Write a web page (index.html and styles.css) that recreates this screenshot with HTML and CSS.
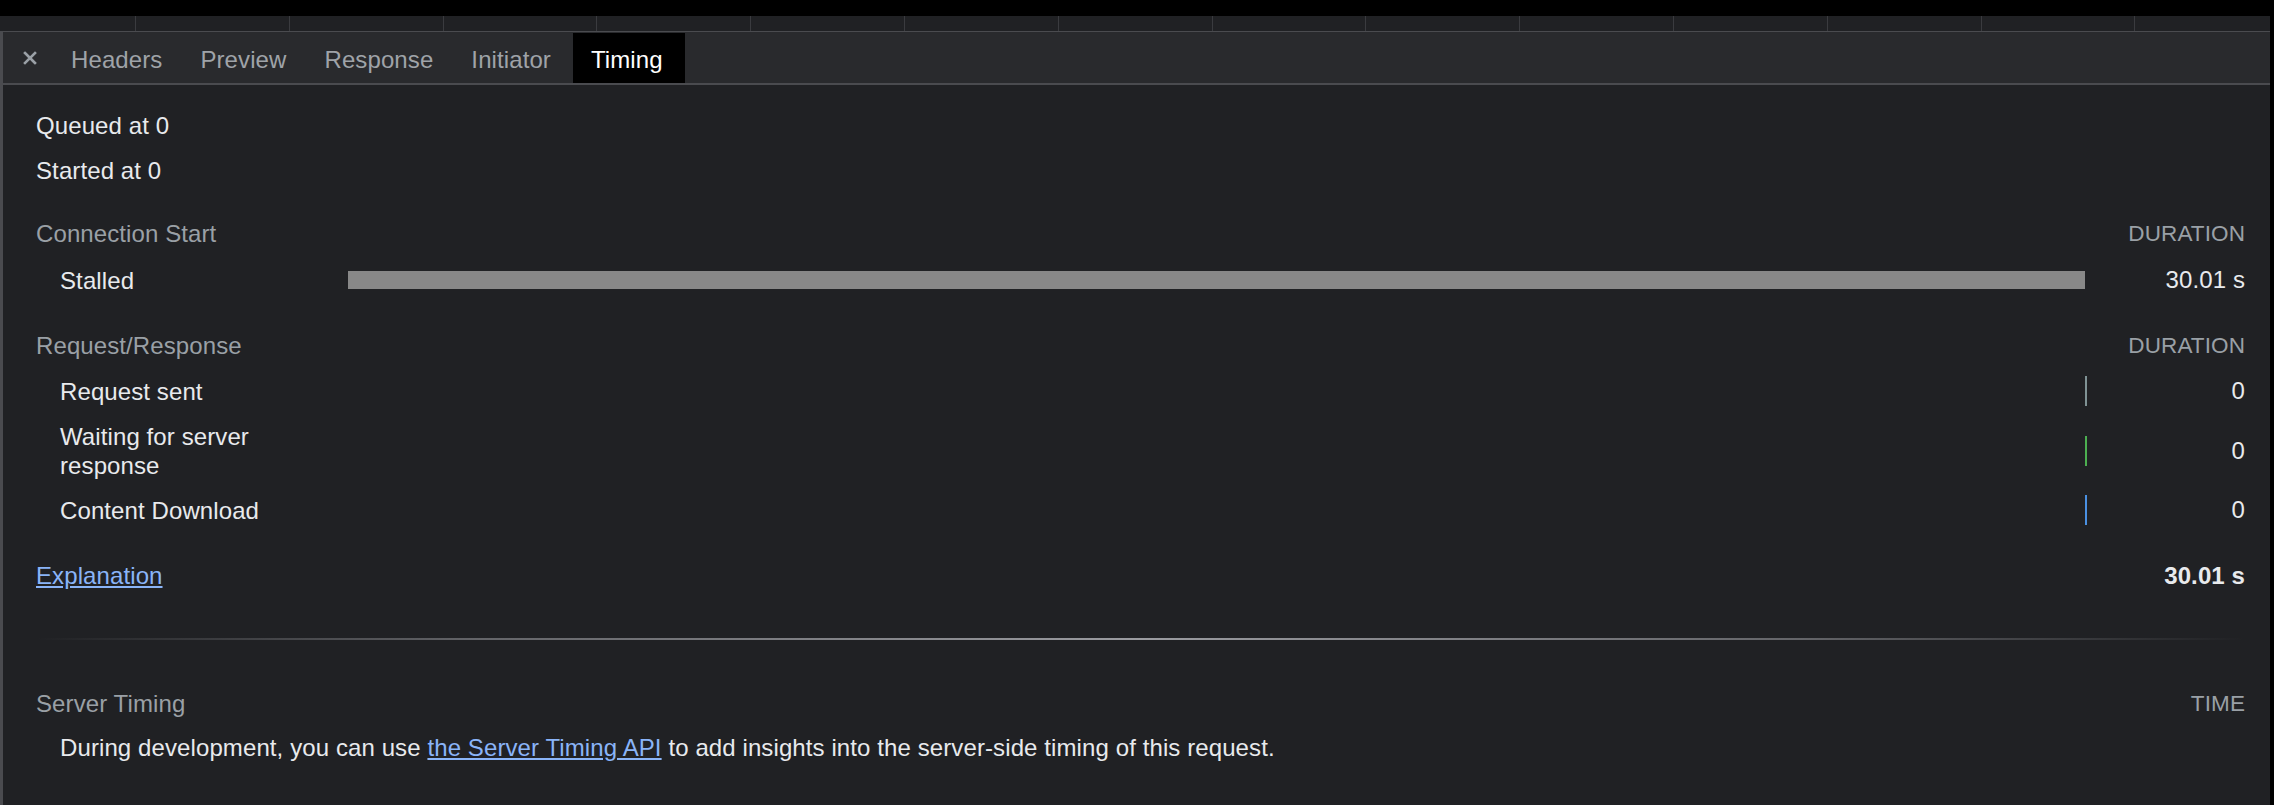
FILE: index.html
```html
<!DOCTYPE html>
<html lang="en">
<head>
<meta charset="utf-8">
<title>Timing</title>
<link rel="stylesheet" href="styles.css">
</head>
<body>
  <div class="waterfall-strip"></div>
  <div class="panel">
    <div class="tabbar">
      <button class="tab-close" aria-label="Close">
        <svg width="14" height="14" viewBox="0 0 14 14"><path d="M2 2 L12 12 M12 2 L2 12" stroke="#9aa0a6" stroke-width="2.6" stroke-linecap="square" fill="none"/></svg>
      </button>
      <div class="tab">Headers</div>
      <div class="tab">Preview</div>
      <div class="tab">Response</div>
      <div class="tab">Initiator</div>
      <div class="tab active">Timing</div>
    </div>

    <div class="timing">
      <div class="meta">
        <div class="meta-row">Queued at 0</div>
        <div class="meta-row">Started at 0</div>
      </div>

      <div class="section-head">
        <span>Connection Start</span>
        <span class="caps">DURATION</span>
      </div>
      <div class="row row-stalled">
        <div class="label">Stalled</div>
        <div class="bar-cell"><div class="bar bar-stalled" style="width:100%"></div></div>
        <div class="dur">30.01 s</div>
      </div>

      <div class="section-head section-gap">
        <span>Request/Response</span>
        <span class="caps">DURATION</span>
      </div>
      <div class="row">
        <div class="label">Request sent</div>
        <div class="bar-cell"><div class="tick tick-sent"></div></div>
        <div class="dur">0</div>
      </div>
      <div class="row row-tall">
        <div class="label">Waiting for server response</div>
        <div class="bar-cell"><div class="tick tick-wait"></div></div>
        <div class="dur">0</div>
      </div>
      <div class="row">
        <div class="label">Content Download</div>
        <div class="bar-cell"><div class="tick tick-download"></div></div>
        <div class="dur">0</div>
      </div>

      <div class="total">
        <a class="link" href="#">Explanation</a>
        <span class="total-value">30.01 s</span>
      </div>

      <hr class="break">

      <div class="section-head server-head">
        <span>Server Timing</span>
        <span class="caps">TIME</span>
      </div>
      <div class="server-note">During development, you can use <a class="link" href="#">the Server Timing API</a> to add insights into the server-side timing of this request.</div>
    </div>
  </div>
</body>
</html>
```
FILE: styles.css
```css
* { box-sizing: border-box; }

html, body {
  margin: 0;
  height: 100%;
}

body {
  background: #000;
  padding-top: 16px;
  display: flex;
  flex-direction: column;
  font-family: "Liberation Sans", Arial, Helvetica, sans-serif;
  font-size: 24px;
  letter-spacing: 0.1px;
  color: #e8eaed;
  overflow: hidden;
}

.waterfall-strip {
  height: 16px;
  margin-right: 4px;
  background-color: #202124;
  background-image: repeating-linear-gradient(to right, transparent 0 135px, #3a3b3f 135px 136px, transparent 136px 153.8px);
  border-bottom: 1px solid #4a4b4f;
}

.panel {
  flex: 1;
  margin-right: 4px;
  border-left: 3px solid #4a4b4f;
  background: #202124;
  display: flex;
  flex-direction: column;
}

.tabbar {
  height: 53px;
  background: #292a2d;
  border-bottom: 2px solid #4a4b4f;
  display: flex;
  align-items: flex-end;
}

.tab-close {
  background: none;
  border: 0;
  padding: 0;
  margin: 0 15px 0 20px;
  width: 14px;
  height: 50px;
  display: flex;
  align-items: center;
  justify-content: center;
}

.tab {
  height: 50px;
  line-height: 50px;
  padding: 2px 19px 0 19px;
  color: #9fa3a8;
  white-space: nowrap;
}

.tab.active {
  background: #000;
  color: #fff;
  margin-left: 3px;
  padding: 2px 22px 0 18px;
}

.timing {
  padding: 18px 25px 0 33px;
}

.meta-row {
  height: 45px;
  line-height: 45px;
}

.section-head {
  margin-top: 18px;
  height: 44px;
  padding-top: 2px;
  display: flex;
  align-items: center;
  justify-content: space-between;
  color: #9aa0a6;
}

.section-gap { margin-top: 18px; }

.caps { font-size: 22.5px; }

.row {
  display: grid;
  grid-template-columns: 288px 1fr 158px;
  align-items: center;
  padding-left: 24px;
  height: 48px;
}

.row-stalled { height: 50px; }
.row-tall { height: 71px; }

.label {
  line-height: 29px;
  padding-right: 40px;
}

.bar-cell {
  display: flex;
  align-items: center;
  height: 30px;
}

.bar-stalled {
  height: 18px;
  background: #888888;
  margin-right: 2px;
}

.tick {
  width: 2px;
  height: 30px;
  margin-left: auto;
}
.tick-sent { background: #7f9294; }
.tick-wait { background: #4caf50; }
.tick-download { background: #4a90e2; }

.dur { text-align: right; }

.total {
  margin-top: 20px;
  height: 44px;
  display: flex;
  align-items: center;
  justify-content: space-between;
}

.total-value { font-weight: bold; }

.link {
  color: #8ab4f8;
  text-decoration: underline;
}

.break {
  margin: 40px 0 0 0;
  border: 0;
  height: 2px;
  background-image: linear-gradient(to right, rgba(155,156,161,0) 0%, rgba(155,156,161,0.55) 20%, #9b9ca1 50%, rgba(155,156,161,0.55) 80%, rgba(155,156,161,0) 100%);
}

.server-head { margin-top: 41px; }

.server-note {
  padding-left: 24px;
  height: 46px;
  line-height: 46px;
}
```
